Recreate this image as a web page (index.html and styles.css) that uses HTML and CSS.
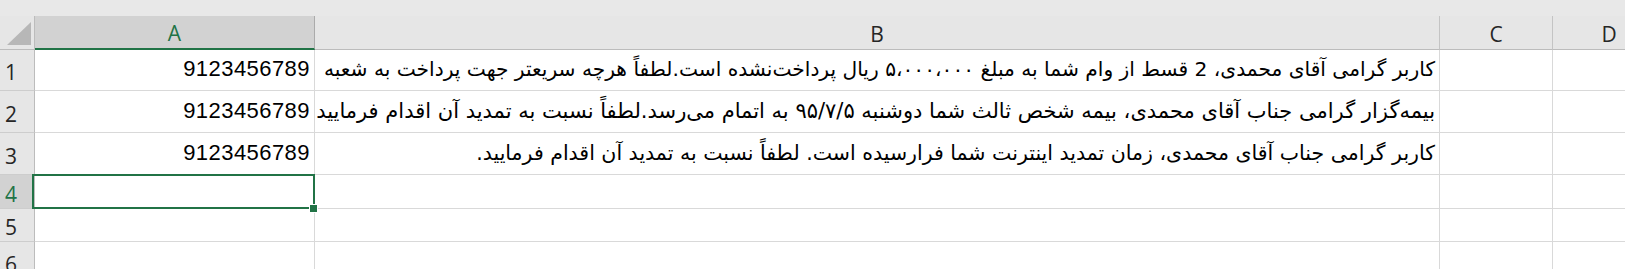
FILE: index.html
```html
<!DOCTYPE html>
<html lang="fa">
<head>
<meta charset="utf-8">
<title>Sheet</title>
<link rel="stylesheet" href="styles.css">
</head>
<body>
<div class="sheet">
  <div class="grid">
    <div class="corner"><span class="tri"></span></div>
    <div class="colhead active">A</div>
    <div class="colhead">B</div>
    <div class="colhead">C</div>
    <div class="colhead">D</div>

    <div class="rowhead">1</div>
    <div class="cell num">9123456789</div>
    <div class="cell fa fa-tight">کاربر گرامی آقای محمدی، 2 قسط از وام شما به مبلغ ۵،۰۰۰،۰۰۰ ریال پرداخت‌نشده است.لطفاً هرچه سریعتر جهت پرداخت به شعبه</div>
    <div class="cell"></div>
    <div class="cell"></div>

    <div class="rowhead">2</div>
    <div class="cell num">9123456789</div>
    <div class="cell fa fa-wide">بیمه‌گزار گرامی جناب آقای محمدی، بیمه شخص ثالث شما دوشنبه ۹۵/۷/۵ به اتمام می‌رسد.لطفاً نسبت به تمدید آن اقدام فرمایید</div>
    <div class="cell"></div>
    <div class="cell"></div>

    <div class="rowhead">3</div>
    <div class="cell num">9123456789</div>
    <div class="cell fa">کاربر گرامی جناب آقای محمدی، زمان تمدید اینترنت شما فرارسیده است. لطفاً نسبت به تمدید آن اقدام فرمایید.</div>
    <div class="cell"></div>
    <div class="cell"></div>

    <div class="rowhead active">4</div>
    <div class="cell selected"></div>
    <div class="cell"></div>
    <div class="cell"></div>
    <div class="cell"></div>

    <div class="rowhead">5</div>
    <div class="cell"></div>
    <div class="cell"></div>
    <div class="cell"></div>
    <div class="cell"></div>

    <div class="rowhead">6</div>
    <div class="cell"></div>
    <div class="cell"></div>
    <div class="cell"></div>
    <div class="cell"></div>
  </div>
</div>
</body>
</html>
```

FILE: styles.css
```css
html, body {
  margin: 0;
  padding: 0;
  background: #e8e8e8;
}

.sheet {
  width: 1625px;
  height: 269px;
  overflow: hidden;
  background: #e8e8e8;
  padding-top: 16px;
  box-sizing: border-box;
}

.grid {
  display: grid;
  grid-template-columns: 35px 280px 1125px 113px 113px;
  grid-template-rows: 34px 41px 42px 42px 34px 33px 40px;
  width: 1666px;
}

.grid > div {
  box-sizing: border-box;
  min-width: 0;
}

.corner {
  background: #e6e6e6;
  border-right: 1px solid #bcbcbc;
  border-bottom: 1px solid #bcbcbc;
  display: flex;
  align-items: flex-end;
  justify-content: flex-end;
  padding: 0 3px 4px 0;
}

.tri {
  display: block;
  width: 24px;
  height: 23px;
  background: #b7b7b7;
  clip-path: polygon(100% 0, 100% 100%, 0 100%);
}

.colhead {
  background: #e6e6e6;
  border-right: 1px solid #c4c4c4;
  border-bottom: 1px solid #bcbcbc;
  display: flex;
  align-items: center;
  justify-content: center;
  font-family: "Open Sans", "Noto Sans", sans-serif;
  font-size: 21px;
  color: #262626;
  padding-top: 2px;
}

.colhead.active {
  background: #d2d2d2;
  color: #217346;
  border-right-color: #ababab;
  border-bottom: 2px solid #217346;
}

.rowhead {
  background: #e6e6e6;
  border-right: 1px solid #bcbcbc;
  border-bottom: 1px solid #cdcdcd;
  display: flex;
  align-items: center;
  justify-content: flex-start;
  padding-left: 5px;
  padding-top: 4px;
  font-family: "Open Sans", "Noto Sans", sans-serif;
  font-size: 21px;
  color: #262626;
}

.rowhead.active {
  background: #d2d2d2;
  color: #217346;
}

.cell {
  background: #ffffff;
  border-right: 1px solid #d9d9d9;
  border-bottom: 1px solid #d9d9d9;
  display: flex;
  align-items: center;
  white-space: nowrap;
  overflow: hidden;
  color: #000;
}

.num {
  justify-content: flex-end;
  padding-right: 4px;
  padding-bottom: 2px;
  font-family: "Liberation Sans", Arial, sans-serif;
  font-size: 22px;
  letter-spacing: 0.45px;
}

.fa {
  direction: rtl;
  justify-content: flex-start;
  padding-right: 4px;
  padding-bottom: 2px;
  font-family: "DejaVu Sans", sans-serif;
  font-size: 20.5px;
}

.fa-tight {
  font-size: 20.2px;
}

.fa-wide {
  font-size: 21px;
}

.selected {
  position: relative;
  overflow: visible;
}

.selected::after {
  content: "";
  position: absolute;
  top: -1px;
  left: -3px;
  right: -1px;
  bottom: -1px;
  border: 2px solid #217346;
  z-index: 2;
}

.selected::before {
  content: "";
  position: absolute;
  width: 7px;
  height: 7px;
  right: -3px;
  bottom: -4px;
  background: #217346;
  box-shadow: 0 0 0 1px #ffffff;
  z-index: 3;
}
```
